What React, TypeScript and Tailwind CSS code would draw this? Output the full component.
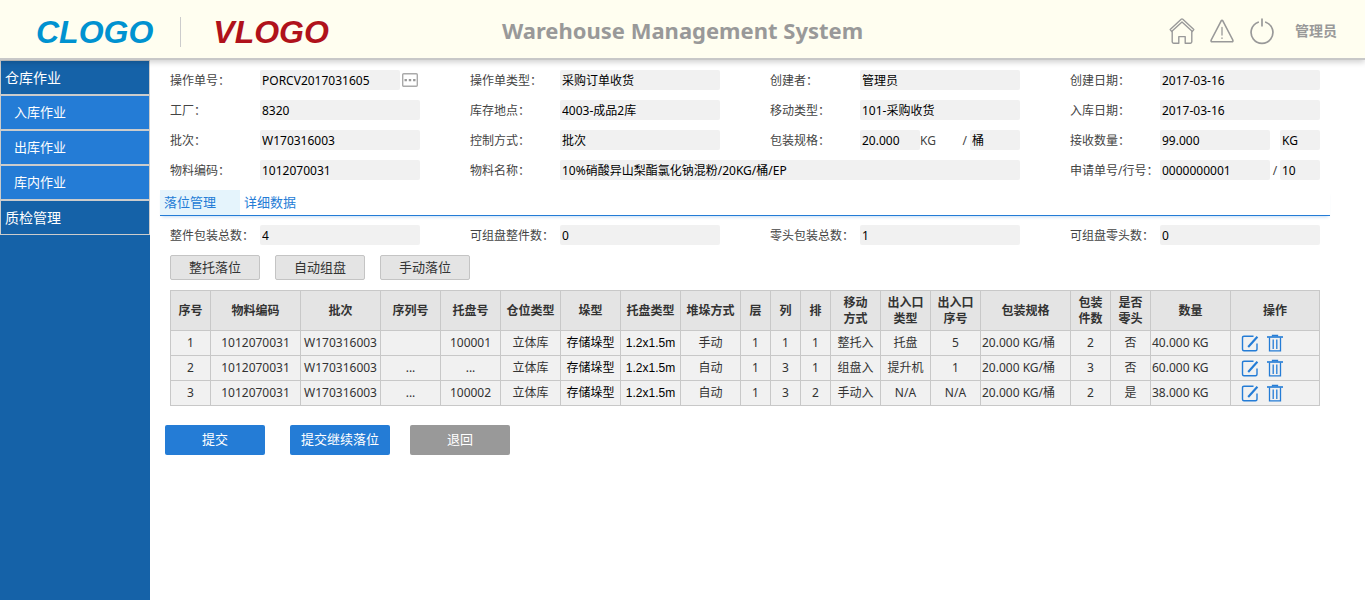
import React from "react";

const inputBase =
  "h-5 min-w-0 rounded-[2px] bg-[#f1f1f1] px-0.5 text-xs text-black outline-none";

function Label({ id, children }: { id: string; children: React.ReactNode }) {
  return (
    <label htmlFor={id} className="h-5 w-[90px] shrink-0 whitespace-nowrap text-xs leading-[22px] text-[#444]">
      {children}
    </label>
  );
}

function Field({ id, label, value, wide }: { id: string; label: string; value: string; wide?: boolean }) {
  return (
    <div className={wide ? "col-span-2 flex" : "flex"}>
      <Label id={id}>{label}</Label>
      <input id={id} readOnly defaultValue={value} className={`${inputBase} flex-1`} />
    </div>
  );
}

function HomeIcon() {
  return (
    <svg viewBox="0 0 26 28" className="h-7 w-[26px]" fill="none" stroke="#999" strokeWidth="1.4" strokeLinejoin="round" strokeLinecap="round">
      <path d="M1.2 12.6 12.2 2.2q.8-.6 1.6 0l11 10.4-1.4 1.8L13 5 2.6 14.4z" />
      <path d="M3.2 14.4v10.4q0 1.4 1.4 1.4h5.2v-6.6h6.4v6.6h5.2q1.4 0 1.4-1.4V14.4" />
    </svg>
  );
}

function WarnIcon() {
  return (
    <svg viewBox="0 0 26 28" className="h-7 w-[26px]" fill="none" stroke="#999" strokeWidth="1.6" strokeLinejoin="round" strokeLinecap="round">
      <path d="M12.2 3.8q.8-1.2 1.6 0l10 19.2q.6 1.6-1 1.8H3.2q-1.6-.2-1-1.8z" />
      <path d="M13 10.5v7.5M13 20.8v.6" strokeWidth="1.3" />
    </svg>
  );
}

function PowerIcon() {
  return (
    <svg viewBox="0 0 26 28" className="h-7 w-[26px]" fill="none" stroke="#999" strokeWidth="1.7" strokeLinecap="round">
      <path d="M9.2 5.2a10.9 10.9 0 1 0 7.6 0M13 2.2v6.6" />
    </svg>
  );
}

function EditIcon() {
  return (
    <svg viewBox="0 0 18 18" className="size-[18px]" fill="none" stroke="#247cd6">
      <path d="M12.5 2.2H3Q1.5 2.2 1.5 3.7v11.6q0 1.5 1.5 1.5h11.5q1.5 0 1.5-1.5V9.5" strokeWidth="1.4" />
      <path d="M7.2 13 16.4 2.8" strokeWidth="2.1" />
    </svg>
  );
}

function TrashIcon() {
  return (
    <svg viewBox="0 0 18 18" className="size-[18px]" fill="none" stroke="#247cd6" strokeWidth="1.3">
      <path d="M1 3h16" strokeWidth="1.6" />
      <path d="M6.5 2.5v-1h5v1M3.5 3.5v13.3h11V3.5M7.2 5.5V15M10.8 5.5V15" />
    </svg>
  );
}

const menu = [
  { name: "仓库作业", top: true },
  { name: "入库作业", top: false },
  { name: "出库作业", top: false },
  { name: "库内作业", top: false },
  { name: "质检管理", top: true },
];

const columns: { title: string[]; width: string }[] = [
  { title: ["序号"], width: "w-[40px]" },
  { title: ["物料编码"], width: "w-[90px]" },
  { title: ["批次"], width: "w-[80px]" },
  { title: ["序列号"], width: "w-[60px]" },
  { title: ["托盘号"], width: "w-[60px]" },
  { title: ["仓位类型"], width: "w-[60px]" },
  { title: ["垛型"], width: "w-[60px]" },
  { title: ["托盘类型"], width: "w-[60px]" },
  { title: ["堆垛方式"], width: "w-[60px]" },
  { title: ["层"], width: "w-[30px]" },
  { title: ["列"], width: "w-[30px]" },
  { title: ["排"], width: "w-[30px]" },
  { title: ["移动", "方式"], width: "w-[50px]" },
  { title: ["出入口", "类型"], width: "w-[50px]" },
  { title: ["出入口", "序号"], width: "w-[50px]" },
  { title: ["包装规格"], width: "w-[90px]" },
  { title: ["包装", "件数"], width: "w-[40px]" },
  { title: ["是否", "零头"], width: "w-[40px]" },
  { title: ["数量"], width: "w-[80px]" },
  { title: ["操作"], width: "" },
];

const rows = [
  ["1", "1012070031", "W170316003", "", "100001", "立体库", "存储垛型", "1.2x1.5m", "手动", "1", "1", "1", "整托入", "托盘", "5", "20.000 KG/桶", "2", "否", "40.000 KG"],
  ["2", "1012070031", "W170316003", "...", "...", "立体库", "存储垛型", "1.2x1.5m", "自动", "1", "3", "1", "组盘入", "提升机", "1", "20.000 KG/桶", "3", "否", "60.000 KG"],
  ["3", "1012070031", "W170316003", "...", "100002", "立体库", "存储垛型", "1.2x1.5m", "自动", "1", "3", "2", "手动入", "N/A", "N/A", "20.000 KG/桶", "2", "是", "38.000 KG"],
];

function cellClass(i: number) {
  if (i === 7) return "text-center text-black font-['Liberation_Sans',sans-serif]";
  if (i === 6) return "text-center text-black";
  if (i === 15 || i === 18) return "pl-px text-left";
  return "text-center";
}

export default function App() {
  return (
    <div className="flex min-h-screen flex-col bg-white font-['Noto_Sans','Noto_Sans_CJK_SC',sans-serif] text-[#444]">
      <header className="relative flex h-[60px] items-center justify-between border-b-2 border-[#c8c8c8] bg-[#fffef0] px-7 shadow-[0_2px_6px_rgba(0,0,0,0.2)]">
        <div className="flex flex-1 items-center pt-1.5 font-['Liberation_Sans',Arial,sans-serif] text-[32px] leading-9 font-bold italic">
          <span className="ml-2 text-[#0092d0]">CLOGO</span>
          <span className="mr-8 ml-[27px] h-[30px] w-px bg-[#ccc]" />
          <span className="text-[#b0121b]">VLOGO</span>
        </div>
        <h1 className="pt-0.5 text-[22px] leading-8 font-bold text-[#999]">Warehouse Management System</h1>
        <div className="flex flex-1 items-center justify-end gap-3.5 pt-1">
          <button type="button" aria-label="主页"><HomeIcon /></button>
          <button type="button" aria-label="警告"><WarnIcon /></button>
          <button type="button" aria-label="退出"><PowerIcon /></button>
          <span className="ml-1.5 text-sm font-bold text-[#999]">管理员</span>
        </div>
      </header>

      <div className="flex flex-1">
        <nav className="w-[150px] shrink-0 bg-[#1562a8]">
          {menu.map((m) => (
            <a
              key={m.name}
              href="#"
              className={
                m.top
                  ? "flex h-[35px] items-center border border-[#ccc] bg-[#1562a8] pl-1 text-sm text-white"
                  : "flex h-[35px] items-center border border-[#ccc] bg-[#247cd6] pl-[13px] text-[13px] text-white"
              }
            >
              {m.name}
            </a>
          ))}
        </nav>

        <main className="min-w-0 flex-1 pt-2.5 pr-[35px] pl-2.5">
          <form className="mx-2.5 grid grid-cols-4 gap-x-[50px] gap-y-2.5">
            <div className="flex">
              <Label id="order">操作单号：</Label>
              <input id="order" readOnly defaultValue="PORCV2017031605" className={`${inputBase} flex-1`} />
              <button type="button" aria-label="选择单号" className="flex w-5 shrink-0 items-center justify-center">
                <svg viewBox="0 0 16 14" className="h-3.5 w-4" fill="none">
                  <rect x=".7" y=".7" width="14.6" height="12.6" rx="1" stroke="#aaa" strokeWidth="1.4" />
                  <path d="M2.5 6h2.4v2.2H2.5zM6.8 6h2.4v2.2H6.8zM11.1 6h2.4v2.2h-2.4z" fill="#999" />
                </svg>
              </button>
            </div>
            <Field id="type" label="操作单类型：" value="采购订单收货" />
            <Field id="creator" label="创建者：" value="管理员" />
            <Field id="created" label="创建日期：" value="2017-03-16" />
            <Field id="plant" label="工厂：" value="8320" />
            <Field id="location" label="库存地点：" value="4003-成品2库" />
            <Field id="move" label="移动类型：" value="101-采购收货" />
            <Field id="indate" label="入库日期：" value="2017-03-16" />
            <Field id="batch" label="批次：" value="W170316003" />
            <Field id="control" label="控制方式：" value="批次" />
            <div className="flex text-xs leading-[22px]">
              <Label id="spec">包装规格：</Label>
              <input id="spec" readOnly defaultValue="20.000" className={`${inputBase} w-[60px] flex-1`} />
              <span className="flex h-5 w-[50px] shrink-0 justify-between pr-[3px]">
                <span>KG</span>
                <span>/</span>
              </span>
              <input aria-label="包装单位" readOnly defaultValue="桶" className={`${inputBase} w-[50px]`} />
            </div>
            <div className="flex">
              <Label id="qty">接收数量：</Label>
              <input id="qty" readOnly defaultValue="99.000" className={`${inputBase} flex-1`} />
              <input aria-label="数量单位" readOnly defaultValue="KG" className={`${inputBase} ml-2.5 w-10`} />
            </div>
            <Field id="material" label="物料编码：" value="1012070031" />
            <Field id="name" label="物料名称：" value="10%硝酸异山梨酯氯化钠混粉/20KG/桶/EP" wide />
            <div className="flex text-xs leading-[22px]">
              <Label id="request">申请单号/行号：</Label>
              <input id="request" readOnly defaultValue="0000000001" className={`${inputBase} flex-1`} />
              <span className="h-5 w-2.5 shrink-0 text-center">/</span>
              <input aria-label="行号" readOnly defaultValue="10" className={`${inputBase} w-10`} />
            </div>
          </form>

          <div role="tablist" className="mt-2.5 flex border-b border-[#247cd6] text-[13px] leading-[25px] text-[#247cd6] shadow-[0_3px_3px_-2px_rgba(36,124,214,0.25)]">
            <button type="button" role="tab" aria-selected="true" className="w-20 bg-[#e5f4fc] pl-1 text-left">落位管理</button>
            <button type="button" role="tab" aria-selected="false" className="w-20 pl-1 text-left">详细数据</button>
          </div>

          <div className="mx-2.5 mt-[9px] grid grid-cols-4 gap-x-[50px]">
            <Field id="total" label="整件包装总数：" value="4" />
            <Field id="whole" label="可组盘整件数：" value="0" />
            <Field id="odd" label="零头包装总数：" value="1" />
            <Field id="oddable" label="可组盘零头数：" value="0" />
          </div>

          <div className="mx-2.5 mt-2.5 flex gap-[15px]">
            {["整托落位", "自动组盘", "手动落位"].map((t) => (
              <button key={t} type="button" className="flex h-[25px] w-[90px] items-center justify-center rounded-[2px] border border-[#c4c4c4] bg-[#e4e4e4] text-[13px] text-[#333]">
                {t}
              </button>
            ))}
          </div>

          <div className="mx-2.5 mt-2.5">
            <table className="w-full table-fixed border-collapse text-xs text-[#333]">
              <thead>
                <tr className="h-10 bg-[#e4e4e4]">
                  {columns.map((c) => (
                    <th key={c.title.join("")} scope="col" className={`${c.width} border border-[#c8c8c8] p-0 leading-4 font-bold whitespace-nowrap`}>
                      {c.title.map((line) => (
                        <span key={line} className="block">{line}</span>
                      ))}
                    </th>
                  ))}
                </tr>
              </thead>
              <tbody>
                {rows.map((r) => (
                  <tr key={r[0]} className="h-[25px] bg-[#f1f1f1]">
                    {r.map((v, i) => (
                      <td key={i} className={`border border-[#c8c8c8] p-0 leading-5 whitespace-nowrap ${cellClass(i)}`}>
                        {v}
                      </td>
                    ))}
                    <td className="border border-[#c8c8c8] p-0">
                      <div className="flex gap-[7px] pl-2.5">
                        <button type="button" aria-label="编辑"><EditIcon /></button>
                        <button type="button" aria-label="删除"><TrashIcon /></button>
                      </div>
                    </td>
                  </tr>
                ))}
              </tbody>
            </table>
          </div>

          <div className="mt-[19px] ml-[5px] flex text-[13px] text-white">
            <button type="button" className="flex h-[30px] w-[100px] items-center justify-center rounded-[2px] bg-[#247cd6]">提交</button>
            <button type="button" className="ml-[25px] flex h-[30px] w-[100px] items-center justify-center rounded-[2px] bg-[#247cd6]">提交继续落位</button>
            <button type="button" className="ml-5 flex h-[30px] w-[100px] items-center justify-center rounded-[2px] bg-[#999]">退回</button>
          </div>
        </main>
      </div>
    </div>
  );
}
